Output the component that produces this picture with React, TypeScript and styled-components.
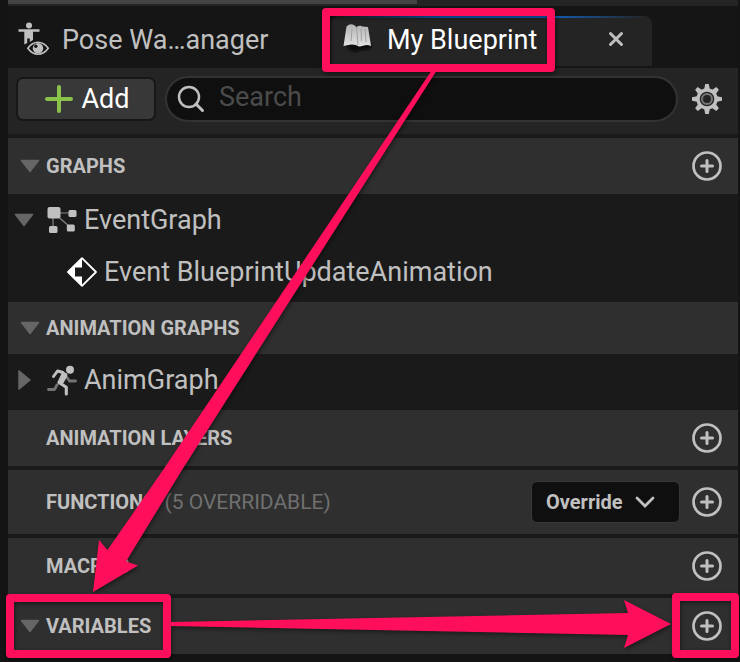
import React from "react";
import styled, { createGlobalStyle } from "styled-components";

const GlobalStyle = createGlobalStyle`
  * { box-sizing: border-box; }
  body {
    margin: 0;
    background: #141414;
    font-family: Roboto, "Liberation Sans", sans-serif;
    color: #c0c0c0;
  }
  button, input { font: inherit; color: inherit; }
`;

const Page = styled.main`
  position: relative;
  min-height: 100vh;
  padding: 0 2px 4px 8px;
`;

const TopEdge = styled.div`
  display: flex;
  height: 6px;
  background: #242424;
`;

const TopEdgeBar = styled.div`
  width: 56%;
  height: 4px;
  background: #444;
`;

const TabBar = styled.nav`
  display: flex;
  align-items: flex-start;
  height: 62px;
  padding-top: 10px;
  background: #151515;
`;

const Tab = styled.div<{ $active?: boolean }>`
  display: flex;
  align-items: center;
  height: 50px;
  width: ${(p) => (p.$active ? "321px" : "323px")};
  padding: 0 8px 2px 10px;
  border-radius: 8px 8px 0 0;
  background: ${(p) =>
    p.$active
      ? "linear-gradient(90deg, #242424 2%, #0f66c8 35%, #0f66c8 65%, #242424 98%) top / 100% 2px no-repeat, #242424"
      : "transparent"};
`;

const TabLabel = styled.button<{ $active?: boolean }>`
  display: flex;
  align-items: center;
  gap: 12px;
  padding: 0;
  border: 0;
  background: none;
  font-size: 27px;
  line-height: 32px;
  white-space: nowrap;
  color: ${(p) => (p.$active ? "#fff" : "#c0c0c0")};
`;

const IconButton = styled.button`
  display: flex;
  flex: none;
  padding: 0;
  border: 0;
  background: none;
  color: #c0c0c0;
`;

const TabClose = styled(IconButton)`
  margin: 0 20px 2px auto;
`;

const Toolbar = styled.div`
  display: flex;
  align-items: center;
  height: 66px;
  padding: 0 16px 4px 8px;
  background: #242424;
`;

const AddButton = styled.button`
  display: flex;
  align-items: center;
  justify-content: center;
  gap: 8px;
  width: 140px;
  height: 44px;
  padding: 0 0 0 3px;
  border: 2px solid #171717;
  border-radius: 7px;
  background: #383838;
  color: #fff;
  font-size: 27px;
  line-height: 32px;
`;

const SearchBox = styled.label`
  display: flex;
  flex: 1;
  align-items: center;
  gap: 14px;
  min-width: 0;
  height: 46px;
  margin: 0 14px 0 9px;
  padding: 0 20px 0 10px;
  border: 2px solid #333;
  border-radius: 23px;
  background: #0f0f0f;
`;

const SearchInput = styled.input`
  flex: 1;
  min-width: 0;
  height: 36px;
  padding: 0 0 4px;
  border: 0;
  outline: 0;
  background: none;
  font-size: 27px;
  &::placeholder { color: #4b4b4b; opacity: 1; }
`;

const Section = styled.section`
  border-top: 4px solid #1a1a1a;
  background: #1a1a1a;
`;

const SectionHeader = styled.header<{ $height?: number }>`
  display: flex;
  align-items: center;
  height: ${(p) => p.$height ?? 56}px;
  padding: 0 16px 0 12px;
  background: #2f2f2f;
`;

const SectionTitle = styled.h2`
  display: flex;
  align-items: center;
  margin: 0;
  font-size: 20px;
  line-height: 24px;
  font-weight: 700;
  white-space: nowrap;
`;

const ArrowSlot = styled.span`
  display: flex;
  flex: none;
  width: 26px;
  color: #666;
`;

const Note = styled.span`
  margin-left: 9px;
  font-size: 21px;
  line-height: 24px;
  color: #707070;
  white-space: nowrap;
`;

const Actions = styled.div`
  display: flex;
  align-items: center;
  gap: 12px;
  margin-left: auto;
`;

const OverrideButton = styled.button`
  display: flex;
  align-items: center;
  gap: 12px;
  width: 149px;
  height: 42px;
  padding: 0 14px;
  border: 1px solid #383838;
  border-radius: 6px;
  background: #0f0f0f;
  font-size: 20px;
  line-height: 24px;
  font-weight: 700;
`;

const Tree = styled.ul`
  margin: 0;
  padding: 0;
  list-style: none;
`;

const TreeRow = styled.li<{ $depth?: number }>`
  display: flex;
  align-items: center;
  height: 52px;
  padding-left: ${(p) => (p.$depth ? 58 : 6)}px;
  font-size: 27px;
  line-height: 32px;
  white-space: nowrap;
`;

const TreeArrow = styled(ArrowSlot)`
  width: 32px;
`;

const TreeIcon = styled.span`
  display: flex;
  flex: none;
  width: 38px;
`;

const Annotations = styled.svg`
  position: absolute;
  inset: 0;
  width: 100%;
  height: 100%;
  pointer-events: none;
  filter: drop-shadow(1px 2px 2px rgba(0, 0, 0, 0.45));
`;

const PoseIcon = () => (
  <svg width="32" height="36" viewBox="0 -2 32 36" fill="#c0c0c0" aria-hidden="true">
    <circle cx="11" cy="1.500" r="3" />
    <path d="M.5 5.300h21v2.400h-6.500v8.300l-3.200 2v-3.500H9.200v4.500l-2.900 1.500V7.700H.5z" />
    <path
      d="M9.800 24.300C12.700 20.300 16.300 18.300 20 18.300s7.300 2 10.300 6c-3 4-6.600 6-10.300 6s-7.300-2-10.200-6z"
      fill="#151515"
      stroke="#151515"
      strokeWidth="3.500"
    />
    <path
      d="M9.800 24.300C12.700 20.300 16.300 18.300 20 18.300s7.300 2 10.300 6c-3 4-6.600 6-10.300 6s-7.300-2-10.200-6z"
      fill="none"
      stroke="#c0c0c0"
      strokeWidth="1.600"
    />
    <circle cx="20" cy="24.300" r="5.200" />
    <circle cx="17.800" cy="22.300" r="1.700" fill="#151515" />
  </svg>
);

const BookIcon = () => (
  <svg width="34" height="32" viewBox="0 0 34 32" aria-hidden="true">
    <defs>
      <linearGradient id="paper" x1="0" y1="0" x2="0" y2="1">
        <stop offset="0" stopColor="#b4b4b4" />
        <stop offset="1" stopColor="#e2e2e2" />
      </linearGradient>
      <filter id="soft"><feGaussianBlur stdDeviation="1" /></filter>
      <filter id="fuzz"><feGaussianBlur stdDeviation="0.500" /></filter>
    </defs>
    <path d="M4 20l5 6 5 2 6-2 10-1v-6z" fill="#080808" filter="url(#soft)" />
    <g filter="url(#fuzz)">
      <path d="M5.500 2.500Q9-1 13 1l2.500 2q3-2 6-.5l5.500.5L30 22q-4-1.500-7-.5t-5 1Q14 20 10 20.500L2.500 22z" fill="url(#paper)" />
      <path d="M15.500 3l1.500 18M11 5l-1 12M20 5l.500 12M24 5l1 13" stroke="#a0a0a0" strokeWidth="1" fill="none" />
    </g>
  </svg>
);

const CloseIcon = () => (
  <svg width="16" height="16" viewBox="0 0 16 16" aria-hidden="true">
    <path d="M2.500 2.500l11 11M13.500 2.500l-11 11" stroke="currentColor" strokeWidth="3" strokeLinecap="round" />
  </svg>
);

const AddIcon = () => (
  <svg width="28" height="28" viewBox="0 0 28 28" aria-hidden="true">
    <path d="M14 2v24M2 14h24" stroke="#8bc24a" strokeWidth="4" strokeLinecap="round" />
  </svg>
);

const SearchIcon = () => (
  <svg width="28" height="28" viewBox="0 0 28 28" fill="none" stroke="#c0c0c0" aria-hidden="true">
    <circle cx="12" cy="12" r="10" strokeWidth="2.500" />
    <path d="M19 19l6.500 6.500" strokeWidth="3" strokeLinecap="round" />
  </svg>
);

const GearIcon = () => (
  <svg width="30" height="30" viewBox="0 0 30 30" fill="none" aria-hidden="true">
    <g fill="#c0c0c0">
      {[0, 45, 90, 135, 180, 225, 270, 315].map((a) => (
        <path key={a} d="M13.200 0h3.600l1.200 6.500h-6z" transform={`rotate(${a} 15 15)`} />
      ))}
    </g>
    <circle cx="15" cy="15" r="9" stroke="#c0c0c0" strokeWidth="3.400" fill="#242424" />
    <circle cx="15" cy="15" r="5" stroke="#777" strokeWidth="2" />
  </svg>
);

const PlusCircleIcon = () => (
  <svg width="30" height="30" viewBox="0 0 30 30" fill="none" stroke="currentColor" aria-hidden="true">
    <circle cx="15" cy="15" r="13.500" strokeWidth="2.700" />
    <path d="M15 9.500v11M9.500 15h11" strokeWidth="3" strokeLinecap="round" />
  </svg>
);

const DownIcon = () => (
  <svg width="20" height="14" viewBox="0 0 20 14" aria-hidden="true">
    <path d="M1.500 1.500h17L10 12.500z" fill="currentColor" stroke="currentColor" strokeWidth="1.500" strokeLinejoin="round" />
  </svg>
);

const RightIcon = () => (
  <svg width="20" height="20" viewBox="0 0 20 20" aria-hidden="true">
    <path d="M5 1v18l11-9z" fill="currentColor" stroke="currentColor" strokeWidth="1.500" strokeLinejoin="round" />
  </svg>
);

const ChevronIcon = () => (
  <svg width="20" height="12" viewBox="0 0 20 12" fill="none" aria-hidden="true">
    <path d="M2 2l8 8 8-8" stroke="currentColor" strokeWidth="2.800" strokeLinecap="round" />
  </svg>
);

const GraphIcon = () => (
  <svg width="31" height="28" viewBox="0 0 31 28" fill="#c0c0c0" aria-hidden="true">
    <path d="M7 7h19M7 6v17M7 6l18 16" stroke="#858585" strokeWidth="1.200" fill="none" />
    <rect x="1.500" y="1" width="13" height="11.500" rx="2" />
    <rect x="22.500" y="4" width="8" height="7" rx="1.500" />
    <rect x="3" y="20" width="8.500" height="7" rx="1.500" />
    <rect x="20.800" y="18.500" width="8" height="7" rx="1.500" />
  </svg>
);

const EventIcon = () => (
  <svg width="32" height="32" viewBox="0 0 32 32" aria-hidden="true">
    <path d="M16 2.200L30 16 16 29.800 2 16z" fill="none" stroke="#fff" strokeWidth="1.800" strokeLinejoin="round" />
    <path d="M16 2v9.500H9v9h7V30L2 16z" fill="#fff" />
  </svg>
);

const RunnerIcon = () => (
  <svg width="32" height="32" viewBox="0 0 32 32" fill="none" strokeLinejoin="round" strokeLinecap="round" aria-hidden="true">
    <path d="M21 13.500l2.500 3.500H29.500M11 21l-2.500 4.500H2.500" stroke="#747474" strokeWidth="2.800" />
    <circle cx="24" cy="5.700" r="4" fill="#c0c0c0" />
    <path d="M17 8.500L11.500 7 7.500 12.500" stroke="#c0c0c0" strokeWidth="2.900" />
    <path d="M14.500 6.500l6 2.800q1.600 1 .8 2.700L17.500 19l-5 1.500-1-2.500 4-8.500z" fill="#c0c0c0" />
    <path d="M13 18.500l7.300 4.800V30" stroke="#c0c0c0" strokeWidth="3.100" />
  </svg>
);

const AddItem = ({ label }: { label: string }) => (
  <IconButton aria-label={`Add ${label}`}>
    <PlusCircleIcon />
  </IconButton>
);

type PanelSectionProps = {
  title: string;
  open?: boolean;
  addable?: boolean;
  height?: number;
  note?: string;
  action?: React.ReactNode;
  children?: React.ReactNode;
};

const PanelSection = ({ title, open, addable = true, height, note, action, children }: PanelSectionProps) => (
  <Section>
    <SectionHeader $height={height}>
      <SectionTitle>
        <ArrowSlot>{open && <DownIcon />}</ArrowSlot>
        {title}
      </SectionTitle>
      {note && <Note>{note}</Note>}
      <Actions>
        {action}
        {addable && <AddItem label={title.toLowerCase()} />}
      </Actions>
    </SectionHeader>
    {children}
  </Section>
);

export default function App() {
  return (
    <Page>
      <GlobalStyle />
      <TopEdge><TopEdgeBar /></TopEdge>
      <TabBar>
        <Tab>
          <TabLabel><PoseIcon />Pose Wa…anager</TabLabel>
        </Tab>
        <Tab $active>
          <TabLabel $active><BookIcon />My Blueprint</TabLabel>
          <TabClose aria-label="Close My Blueprint"><CloseIcon /></TabClose>
        </Tab>
      </TabBar>
      <Toolbar>
        <AddButton><AddIcon />Add</AddButton>
        <SearchBox>
          <SearchIcon />
          <SearchInput type="text" placeholder="Search" aria-label="Search" />
        </SearchBox>
        <IconButton aria-label="Settings"><GearIcon /></IconButton>
      </Toolbar>
      <PanelSection title="GRAPHS" open>
        <Tree>
          <TreeRow>
            <TreeArrow><DownIcon /></TreeArrow>
            <TreeIcon><GraphIcon /></TreeIcon>
            EventGraph
          </TreeRow>
          <TreeRow $depth={1}>
            <TreeIcon><EventIcon /></TreeIcon>
            Event BlueprintUpdateAnimation
          </TreeRow>
        </Tree>
      </PanelSection>
      <PanelSection title="ANIMATION GRAPHS" open addable={false} height={52}>
        <Tree>
          <TreeRow>
            <TreeArrow><RightIcon /></TreeArrow>
            <TreeIcon><RunnerIcon /></TreeIcon>
            AnimGraph
          </TreeRow>
        </Tree>
      </PanelSection>
      <PanelSection title="ANIMATION LAYERS" />
      <PanelSection
        title="FUNCTIONS"
        height={64}
        note="(5 OVERRIDABLE)"
        action={<OverrideButton>Override<ChevronIcon /></OverrideButton>}
      />
      <PanelSection title="MACROS" />
      <PanelSection title="VARIABLES" open />
      <Annotations viewBox="0 0 740 662" preserveAspectRatio="none" aria-hidden="true">
        <g fill="none" stroke="#ff0f5b" strokeWidth="8" strokeLinejoin="round">
          <rect x="326" y="12" width="225" height="56" />
          <rect x="10" y="598" width="157" height="56" />
          <rect x="676" y="597" width="59" height="57" />
        </g>
        <g fill="#ff0f5b">
          <path d="M432 70h5L182 470 126 561.500l12 4L93 592l6-52 8.500 10L163 470z" />
          <path d="M170 622l458-9-4-13 47 24-47 24 4-13-458-9z" />
        </g>
      </Annotations>
    </Page>
  );
}
